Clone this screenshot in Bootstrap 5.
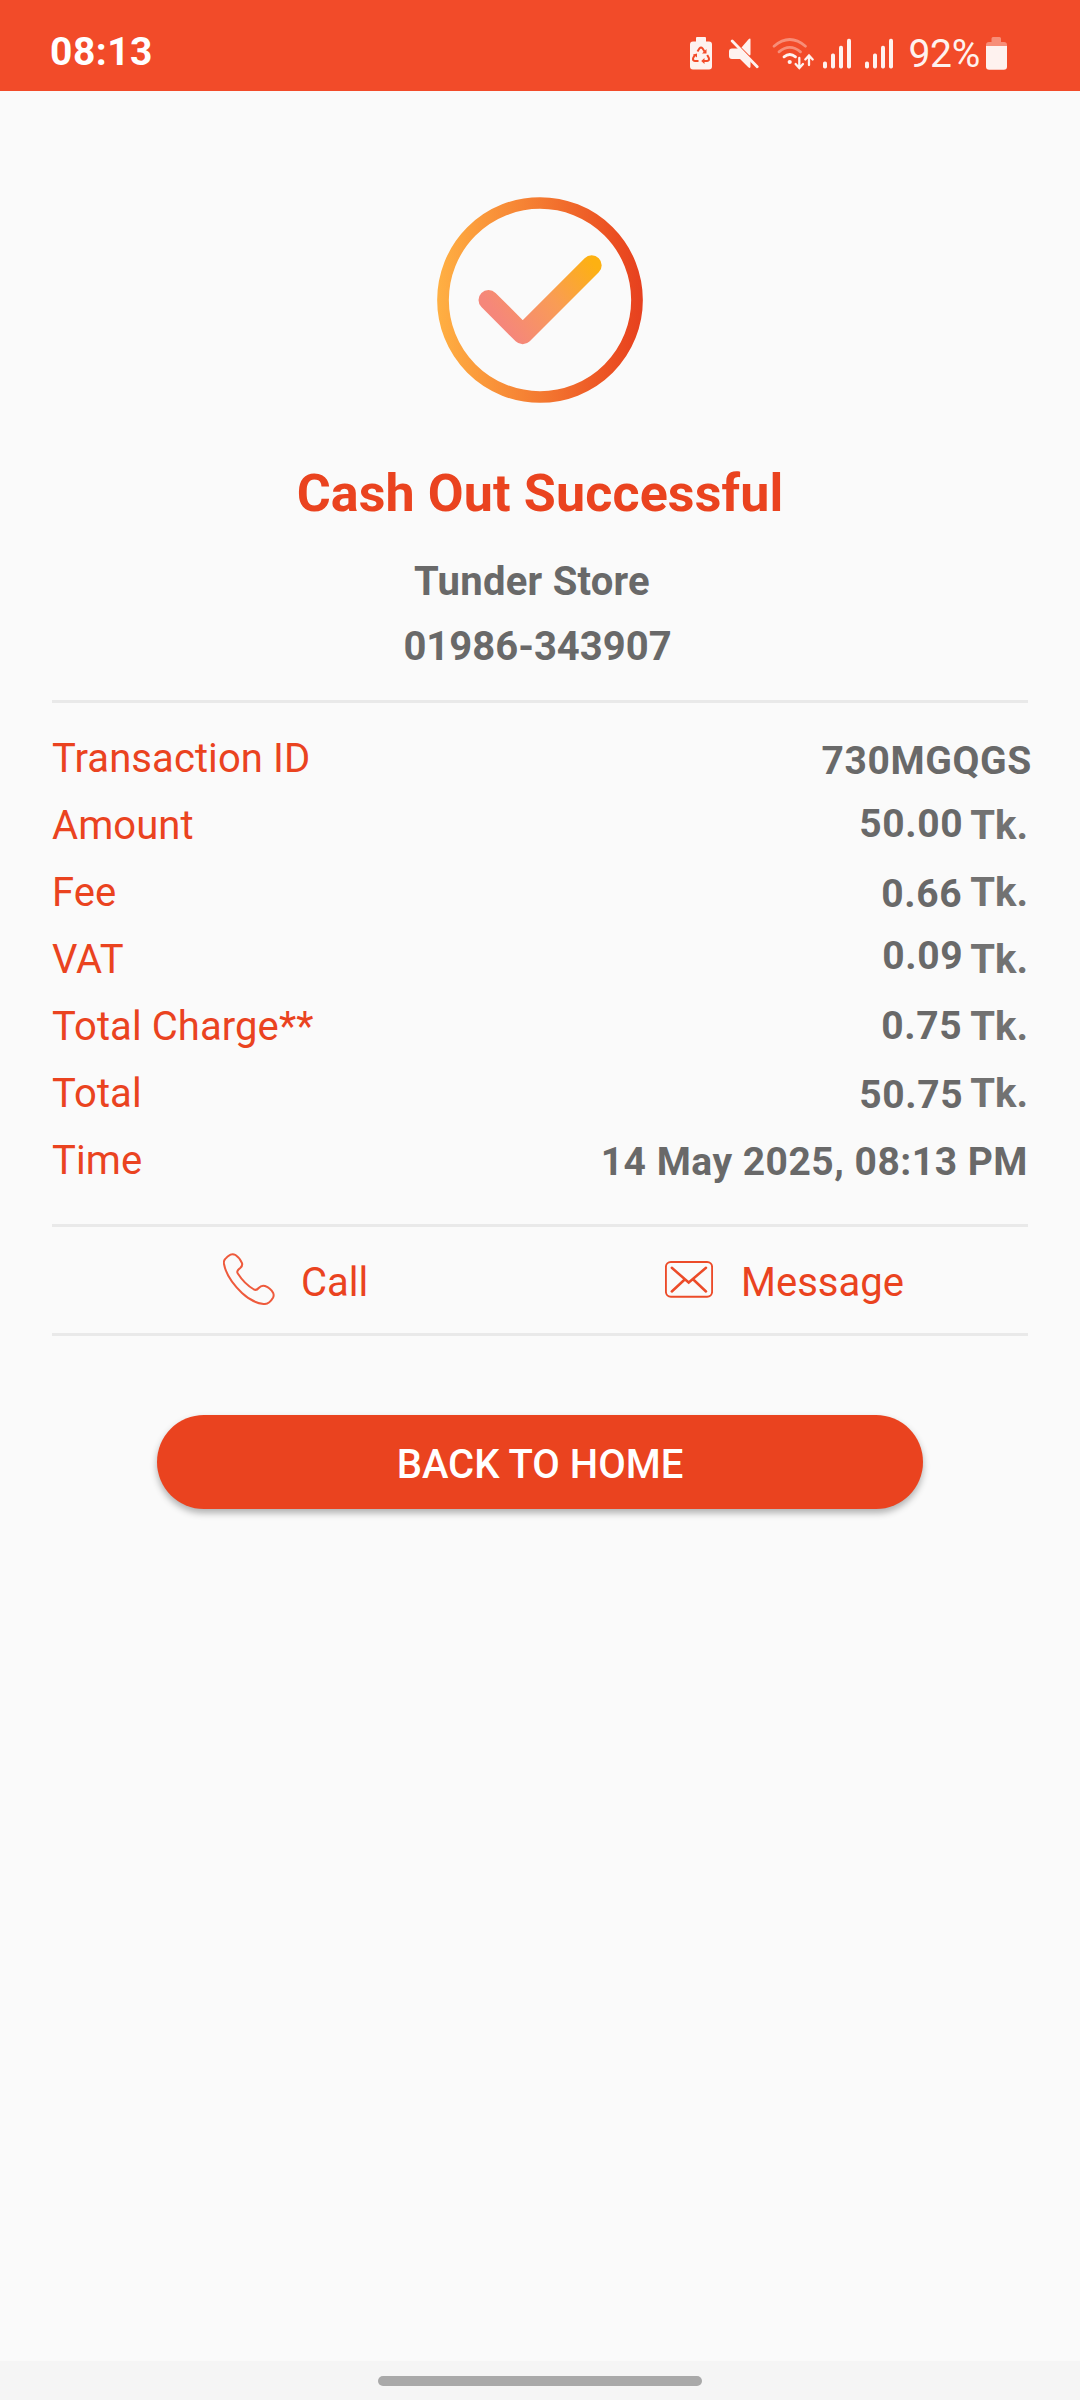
<!DOCTYPE html>
<html lang="en">
<head>
<meta charset="utf-8">
<meta name="viewport" content="width=device-width, initial-scale=1">
<title>Cash Out Successful</title>
<link href="https://cdn.jsdelivr.net/npm/bootstrap@5.3.0/dist/css/bootstrap.min.css" rel="stylesheet">
<style>
:root{--brand:#ea431f;--ink:#696969}
body{background:#fafafa;font-family:Roboto,"Liberation Sans",sans-serif;font-size:40px;line-height:67px;color:var(--ink)}
svg{display:block;flex:none}
.screen{height:2400px;overflow:hidden}
.statusbar{height:91px;background:#f24b29;color:#fff;padding-left:50px;padding-right:73px;font-size:39px}
.clock{letter-spacing:.5px;padding-top:6px}
.percent{color:#fef2ef;margin-left:14px;margin-right:6px;letter-spacing:-.3px;padding-top:8px}
.percent,.clock{height:91px;line-height:92px}
.icons{fill:#fef2ef;stroke:none}
.tick{margin-top:103px}
.headline{color:var(--brand);font-size:52px;line-height:66px;margin-top:55px;letter-spacing:.12px}
.payee{line-height:65px}
.payee-name{margin-top:22px;padding-right:16px;letter-spacing:.25px}
.payee-number{padding-right:5px}
.rule{height:3px;background:#e9e9e9}
.rule-top{margin-top:21px}
.details{padding:22px 0 30px}
.body-pad{padding-left:52px;padding-right:52px}
.brand-text{color:var(--brand)}
.detail{height:67px}
.detail .brand-text{letter-spacing:.08px}
.figure{font-size:39px;letter-spacing:.65px}
.when{letter-spacing:.5px}
.unit{color:#727272;margin-left:7px}
.shift-left{margin-right:1px}
.nudge-up{margin-top:-1px}
.nudge-up-more{margin-top:-3px}
.nudge-down{margin-top:2px}
.txn-code{margin-right:-4px;margin-top:3px}
.actions{height:106px}
.actions span{padding-top:4px}
.actions svg{margin-bottom:2px}
.call-link{padding-left:171px;width:613px}
.home-btn{width:766px;height:94px;margin:79px auto 0;background:var(--brand);border:0;border-radius:47px;color:#fff;font-size:40px;font-weight:500;line-height:94px;padding:3px 0 0;box-shadow:0 4px 7px rgba(0,0,0,.3)}
.home-btn:hover{background:var(--brand);color:#fff}
.gesture{height:39px;background:#f5f5f5;padding-top:15px}
.gesture-pill{width:324px;height:10px;border-radius:5px;background:#a9a9a9}
</style>
</head>
<body>
<div class="screen d-flex flex-column">
  <header class="statusbar d-flex justify-content-between">
    <div class="clock fw-bold">08:13</div>
    <div class="icons d-flex">
      <svg width="22" height="91" viewBox="690 0 22 91"><path d="M697 37h8q1 0 1 1v3.500h3q3 0 3 3v22q0 3-3 3h-16q-3 0-3-3v-22q0-3 3-3h3V38q0-1 1-1z"/><g fill="none" stroke="#f24b29" stroke-width="2"><path d="M697.500 51.500l2-3.200q1.500-1.800 3 0l2 3.200M694.800 55l-1.500 2.700q-1.200 3 1.700 3.300h3.500M707.200 55l1.500 2.700q1.200 3-1.700 3.300h-4"/></g><path fill="#f24b29" d="M706.500 49v4.500h-4.500zM693 54.500l4-1v4zM704.500 58v6l-3.300-3z"/></svg>
      <svg class="ms-3" width="31" height="91" viewBox="728 0 31 91"><path d="M741.500 47.500l7.300-8.500q1.700-1.500 1.700.8v14.500q0 1.800-1.500.7z"/><path d="M732 48.500h7l11.500 11.500v6.500q0 2.500-2.200.8l-8.300-8.300h-8q-3 0-3-3v-4.500q0-3 3-3z"/><path d="M732.200 41l25 25.800" fill="none" stroke="#fef2ef" stroke-width="2.800" stroke-linecap="round"/></svg>
      <svg width="43" height="91" viewBox="772 0 43 91" style="margin-left:13px"><g fill="none" stroke="#fef2ef" stroke-width="2.800" stroke-linecap="round"><path opacity=".4" d="M774 46.200q15.700-13.500 31.500 0M779 51.800q10.700-8.800 21.500 0"/><path d="M784 56.800q5.800-4.600 11.500 0"/><path stroke-width="2.300" d="M799.300 58v9.500M795.600 64l3.700 4 3.700-4M809 65v-9M805.300 59.500l3.700-4 3.700 4"/></g><circle cx="789.700" cy="62" r="2.100"/></svg>
      <svg width="30" height="91" viewBox="822 0 30 91" style="margin-left:7px"><rect x="823" y="61.500" width="4" height="7" rx="1.800"/><rect x="831" y="53.500" width="4" height="15" rx="1.700"/><rect x="839" y="45.700" width="4" height="22.800" rx="1.700"/><rect x="847" y="38.800" width="4" height="29.700" rx="1.700"/></svg>
      <svg width="30" height="91" viewBox="822 0 30 91" style="margin-left:12px"><rect x="823" y="61.500" width="4" height="7" rx="1.800"/><rect x="831" y="53.500" width="4" height="15" rx="1.700"/><rect x="839" y="45.700" width="4" height="22.800" rx="1.700"/><rect x="847" y="38.800" width="4" height="29.700" rx="1.700"/></svg>
      <span class="percent">92%</span>
      <svg width="21" height="91" viewBox="986 0 21 91"><path opacity=".4" d="M986 46v-1q0-3 3-3h2.500v-3.500q0-1.500 1.500-1.500h6.500q1.500 0 1.500 1.500V42h3q3 0 3 3v1z"/><path d="M986 46h21v20.500q0 3.200-3.200 3.200h-14.600q-3.200 0-3.200-3.200z"/></svg>
    </div>
  </header>

  <main class="flex-grow-1">
    <section class="d-flex flex-column align-items-center text-center">
      <svg class="tick" width="212" height="212" viewBox="434 194 212 212" fill="none">
        <defs>
          <linearGradient id="ring" gradientUnits="userSpaceOnUse" x1="437" y1="300" x2="643" y2="300"><stop stop-color="#ffb043"/><stop offset=".5" stop-color="#f47a31"/><stop offset=".9" stop-color="#ea4a20"/><stop offset="1" stop-color="#e6401f"/></linearGradient>
          <linearGradient id="mark-fill" gradientUnits="userSpaceOnUse" x1="505" y1="326" x2="591" y2="260"><stop stop-color="#f5877a"/><stop offset=".5" stop-color="#f99c55"/><stop offset="1" stop-color="#fdb112"/></linearGradient>
        </defs>
        <circle cx="540" cy="300" r="97" stroke="url(#ring)" stroke-width="11.700"/>
        <path d="M488.500 300l34.200 34.200 69-69" stroke="url(#mark-fill)" stroke-width="20" stroke-linecap="round" stroke-linejoin="round"/>
      </svg>
      <h1 class="headline fw-bold mb-0">Cash Out Successful</h1>
      <div class="payee payee-name fw-bold">Tunder Store</div>
      <div class="payee payee-number fw-bold">01986-343907</div>
    </section>

    <section class="body-pad">
      <div class="rule rule-top"></div>
      <div class="details">
        <div class="detail d-flex justify-content-between"><span class="brand-text">Transaction ID</span><span class="figure fw-bold txn-code">730MGQGS</span></div>
        <div class="detail d-flex"><span class="brand-text me-auto">Amount</span><span class="figure fw-bold nudge-up">50.00</span><span class="unit fw-bold">Tk.</span></div>
        <div class="detail d-flex"><span class="brand-text me-auto">Fee</span><span class="figure fw-bold nudge-down shift-left">0.66</span><span class="unit fw-bold">Tk.</span></div>
        <div class="detail d-flex"><span class="brand-text me-auto">VAT</span><span class="figure fw-bold nudge-up-more">0.09</span><span class="unit fw-bold">Tk.</span></div>
        <div class="detail d-flex"><span class="brand-text me-auto">Total Charge**</span><span class="figure fw-bold shift-left">0.75</span><span class="unit fw-bold">Tk.</span></div>
        <div class="detail d-flex"><span class="brand-text me-auto">Total</span><span class="figure fw-bold nudge-down">50.75</span><span class="unit fw-bold">Tk.</span></div>
        <div class="detail d-flex justify-content-between"><span class="brand-text">Time</span><span class="figure when fw-bold nudge-down">14 May 2025, 08:13 PM</span></div>
      </div>
      <div class="rule"></div>
      <div class="actions d-flex align-items-center brand-text">
        <div class="call-link d-flex align-items-center">
          <svg width="52" height="52" viewBox="0 0 52 52" fill="none" stroke="#ee5a3c" stroke-width="2"><path d="M7.500 1.600Q10 .5 12.500 2Q17 5 19 10.200Q19.800 12.500 17.500 14.700Q13 18 14.800 20.500Q21.500 31 31 36.500Q33.500 37.700 35.700 35Q38.500 31.800 42 33Q47.500 35 50.200 40Q51.200 42.500 50 44.700Q46 51.500 40.500 51Q29 49.500 19 40Q3.500 25 1 11Q.3 8 2.200 6Q4.500 3 7.500 1.600Z"/></svg>
          <span style="padding-left:26px">Call</span>
        </div>
        <div class="d-flex align-items-center">
          <svg width="48" height="37" viewBox="0 0 48 37" fill="none" stroke="#ec4b29"><rect x=".9" y="1" width="46.200" height="34.800" rx="5" stroke-width="1.900"/><path d="M6.800 6.800L23.700 21.500 41 6.800M6.800 30.500L19.700 18.500M41 30.500L28.300 18.500" stroke-width="2.500" stroke-linecap="round"/></svg>
          <span style="padding-left:28px">Message</span>
        </div>
      </div>
      <div class="rule"></div>
    </section>
    <button type="button" class="btn home-btn d-block">BACK TO HOME</button>
  </main>

  <footer class="gesture d-flex justify-content-center"><div class="gesture-pill"></div></footer>
</div>
<script src="https://cdn.jsdelivr.net/npm/bootstrap@5.3.0/dist/js/bootstrap.bundle.min.js"></script>
</body>
</html>
